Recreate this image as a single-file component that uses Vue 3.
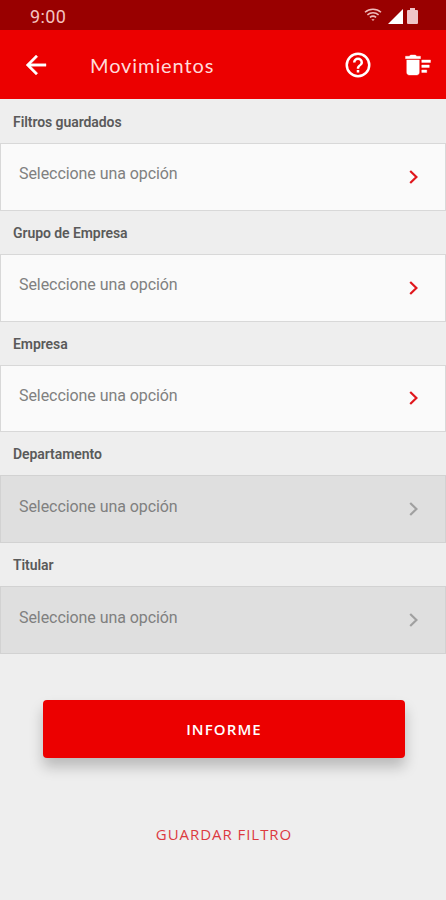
<script setup>
const filters = [
  { label: 'Filtros guardados', enabled: true },
  { label: 'Grupo de Empresa', enabled: true },
  { label: 'Empresa', enabled: true },
  { label: 'Departamento', enabled: false },
  { label: 'Titular', enabled: false },
]
</script>

<template>
  <div class="screen">
    <div class="status">
      <span class="clock">9:00</span>
      <div class="indicators">
        <svg class="wifi" viewBox="0 0 18 14" fill="none" stroke="#f0bcbc" stroke-width="1.5">
          <path d="M1 4.200C5.600.1 12.400.1 17 4.200M3.400 6.900c3.200-2.800 8-2.800 11.200 0M5.900 9.400c1.800-1.500 4.400-1.500 6.200 0" />
          <path d="M7.400 11.200h3.200L9 13z" fill="#f0bcbc" stroke="none" />
        </svg>
        <svg class="signal" viewBox="0 0 15 15"><path d="M15 0v15H0z" fill="#fff" /></svg>
        <svg class="battery" viewBox="0 0 11 16"><path d="M3 0h5v2h2q1 0 1 1v12q0 1-1 1H1q-1 0-1-1V3q0-1 1-1h2z" fill="#efc4c8" /></svg>
      </div>
    </div>
    <header class="bar">
      <button class="icon-btn" aria-label="Volver">
        <svg viewBox="0 0 24 24"><path d="M20 11H7.830l5.590-5.590L12 4l-8 8 8 8 1.410-1.410L7.830 13H20z" stroke="#fff" stroke-width=".3" /></svg>
      </button>
      <h1 class="title">Movimientos</h1>
      <button class="icon-btn help" aria-label="Ayuda">
        <svg viewBox="0 0 24 24"><path d="M11 18h2v-2h-2zm1-16a10 10 0 1 0 0 20 10 10 0 0 0 0-20m0 18a8 8 0 1 1 0-16 8 8 0 0 1 0 16m0-14a4 4 0 0 0-4 4h2a2 2 0 1 1 4 0c0 2-3 1.750-3 5h2c0-2.250 3-2.500 3-5a4 4 0 0 0-4-4" /></svg>
      </button>
      <button class="icon-btn" aria-label="Borrar filtros">
        <svg viewBox="0 0 24 24"><path d="M15 16h4v2h-4zm0-8h7v2h-7zm0 4h6v2h-6zM3 18c0 1.100.9 2 2 2h6c1.100 0 2-.9 2-2V8H3zM14 5h-3l-1-1H6L5 5H2v2h12z" stroke="#fff" stroke-width=".3" /></svg>
      </button>
    </header>
    <main class="content">
      <section v-for="f in filters" :key="f.label" class="group">
        <div class="label">{{ f.label }}</div>
        <div class="field" :class="{ disabled: !f.enabled }">
          <span class="value">Seleccione una opción</span>
          <svg class="chevron" viewBox="0 0 9 14"><path d="M1.200 1 7.400 7l-6.200 6" fill="none" stroke="currentColor" stroke-width="2.200" /></svg>
        </div>
      </section>
      <div class="actions">
        <button class="primary">INFORME</button>
        <button class="secondary">GUARDAR FILTRO</button>
      </div>
    </main>
  </div>
</template>

<style>
body {
  background: #eee;
}
</style>

<style scoped>
.screen {
  width: 446px;
  height: 900px;
  overflow: hidden;
  background: #eee;
  font-family: Roboto, sans-serif;
}
button {
  border: 0;
  padding: 0;
  background: none;
}
.status {
  box-sizing: border-box;
  height: 30px;
  padding: 0 28.5px 0 30px;
  background: #990000;
  display: flex;
  justify-content: space-between;
  align-items: center;
}
.clock {
  font-size: 18px;
  line-height: 30px;
  letter-spacing: 0.4px;
  color: #f3c4c0;
  padding-top: 3px;
}
.indicators {
  display: flex;
  align-items: flex-start;
  height: 15px;
}
.wifi {
  width: 18px;
  height: 14px;
  margin-right: 6px;
}
.signal {
  width: 15px;
  height: 15px;
  margin: 1px 4px 0 0;
}
.battery {
  width: 11px;
  height: 16px;
}
.bar {
  box-sizing: border-box;
  height: 69px;
  padding: 0 13.5px 0 20.5px;
  background: #ec0000;
  display: flex;
  align-items: center;
}
.icon-btn {
  width: 30px;
  height: 30px;
  flex: none;
}
.icon-btn svg {
  display: block;
  width: 30px;
  height: 30px;
  fill: #fff;
}
.title {
  margin: 0 auto 0 39.5px;
  font: 400 20px/30px Lato, sans-serif;
  letter-spacing: 0.9px;
  color: #ffdada;
}
.help {
  margin-right: 30px;
}
.content {
  padding-top: 1px;
}
.group {
  height: 110.8px;
  display: flex;
  flex-direction: column;
}
.label {
  height: 43px;
  flex: none;
  padding: 1px 13px 0;
  box-sizing: border-box;
  font-size: 14px;
  font-weight: 600;
  line-height: 42px;
  letter-spacing: -0.07px;
  color: #5a5a5a;
}
.field {
  box-sizing: border-box;
  flex: 1;
  padding: 0 27px 0 18px;
  border: 1px solid #d8d8d8;
  background: #fafafa;
  color: #e0161c;
  display: flex;
  justify-content: space-between;
  align-items: center;
}
.value {
  font-size: 16px;
  line-height: 20px;
  letter-spacing: -0.07px;
  padding-bottom: 5px;
  color: #808080;
}
.chevron {
  width: 9px;
  height: 14px;
}
.disabled {
  background: #dfdfdf;
  border-color: #d2d2d2;
  color: #a0a0a0;
}
.actions {
  padding: 46px 41px 0 43px;
  display: flex;
  flex-direction: column;
  align-items: center;
}
.primary {
  width: 100%;
  height: 58px;
  border-radius: 4px;
  background: #ec0000;
  box-shadow: 0 9px 14px rgba(0, 0, 0, 0.22);
  color: #fff;
  font: 600 15px/58px "Open Sans", sans-serif;
  letter-spacing: 1.1px;
}
.secondary {
  margin-top: 61px;
  color: #dc3a3f;
  font: 400 15px/30px "Open Sans", sans-serif;
  letter-spacing: 0.95px;
}
</style>
